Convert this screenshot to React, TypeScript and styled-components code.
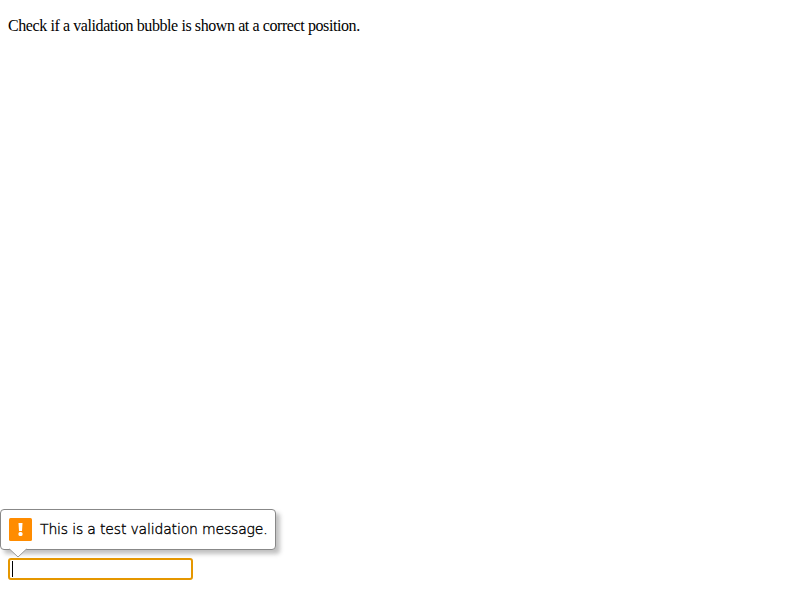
import React from 'react';
import styled, { createGlobalStyle } from 'styled-components';

const GlobalStyle = createGlobalStyle`
  body { margin: 0; background: #fff; overflow: hidden; }
`;

const Page = styled.main`
  box-sizing: border-box;
  height: 600px;
  padding: 16px 8px 20px;
  display: flex;
  flex-direction: column;
  justify-content: space-between;
`;

const Description = styled.p`
  margin: 0;
  font: 16px/19px "Liberation Serif", serif;
  letter-spacing: -0.41px;
  color: #000;
`;

const Field = styled.div`
  position: relative;
  width: 185px;
  height: 22px;
`;

const Input = styled.div`
  box-sizing: border-box;
  width: 185px;
  height: 22px;
  border: 2px solid #e59700;
  border-radius: 3px;
  background: #fff;
  padding: 1px;
  display: flex;
`;

const Caret = styled.span`
  width: 1px;
  height: 16px;
  margin-left: 1px;
  background: #000;
`;

const Bubble = styled.div`
  position: absolute;
  left: -8px;
  bottom: 30px;
  box-sizing: border-box;
  width: 276px;
  height: 41px;
  padding: 0 8px;
  display: flex;
  align-items: center;
  gap: 8px;
  border: 1px solid #888;
  border-radius: 4px;
  background: #fff;
  box-shadow: 4px 4px 4px rgba(100, 100, 100, 0.4);
`;

const WarningIcon = styled.svg`
  flex: none;
`;

const Message = styled.span`
  font: 200 14px/18px "DejaVu Sans", sans-serif;
  letter-spacing: -0.17px;
  -webkit-text-stroke: 0.35px #000;
  white-space: nowrap;
  color: #000;
  margin-top: -2px;
`;

const Arrow = styled.svg`
  position: absolute;
  left: 8px;
  top: 38px;
`;

export default function App() {
  return (
    <>
      <GlobalStyle />
      <Page>
        <Description>Check if a validation bubble is shown at a correct position.</Description>
        <Field>
          <Input><Caret /></Input>
          <Bubble>
            <WarningIcon width="23" height="23" viewBox="0 0 23 23">
              <rect width="23" height="23" rx="1.5" fill="#ff8c00" />
              <path d="M9.5 5h4l-.5 8h-3z" fill="#fff" />
              <rect x="9.5" y="14" width="4" height="4" rx="1.5" fill="#fff" />
            </WarningIcon>
            <Message>This is a test validation message.</Message>
            <Arrow width="18" height="10" viewBox="0 0 18 10">
              <path d="M.5 0h17v1L9 9 .5 1z" fill="#fff" />
              <path d="M.5 1L9 9l8.5-8" fill="none" stroke="#999" />
            </Arrow>
          </Bubble>
        </Field>
      </Page>
    </>
  );
}
